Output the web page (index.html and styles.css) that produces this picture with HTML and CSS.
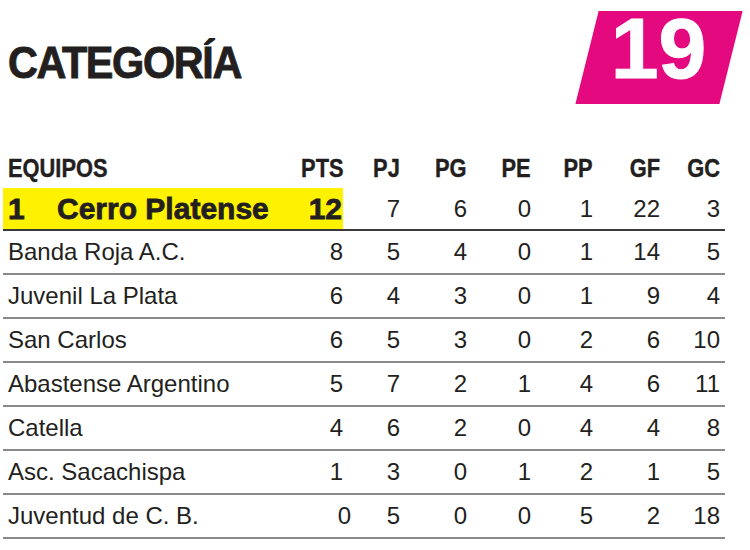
FILE: index.html
```html
<!DOCTYPE html>
<html lang="es">
<head>
<meta charset="utf-8">
<title>Categoría 19</title>
<link rel="stylesheet" href="styles.css">
</head>
<body>
<div class="page">
  <header class="top">
    <h1 class="title">CATEGORÍA</h1>
    <div class="badge"><span class="badge-num">19</span></div>
  </header>
  <div class="table">
    <div class="row head">
      <div class="c name"><span class="h">EQUIPOS</span></div>
      <div class="c"><span class="h">PTS</span></div>
      <div class="c"><span class="h">PJ</span></div>
      <div class="c"><span class="h">PG</span></div>
      <div class="c"><span class="h">PE</span></div>
      <div class="c"><span class="h">PP</span></div>
      <div class="c"><span class="h">GF</span></div>
      <div class="c"><span class="h">GC</span></div>
    </div>
    <div class="row leader">
      <div class="c name hl"><span class="rank">1</span>Cerro Platense</div>
      <div class="c pts hl">12</div>
      <div class="c">7</div>
      <div class="c">6</div>
      <div class="c">0</div>
      <div class="c">1</div>
      <div class="c">22</div>
      <div class="c">3</div>
    </div>
    <div class="row">
      <div class="c name">Banda Roja A.C.</div>
      <div class="c">8</div><div class="c">5</div><div class="c">4</div><div class="c">0</div><div class="c">1</div><div class="c">14</div><div class="c">5</div>
    </div>
    <div class="row">
      <div class="c name">Juvenil La Plata</div>
      <div class="c">6</div><div class="c">4</div><div class="c">3</div><div class="c">0</div><div class="c">1</div><div class="c">9</div><div class="c">4</div>
    </div>
    <div class="row">
      <div class="c name">San Carlos</div>
      <div class="c">6</div><div class="c">5</div><div class="c">3</div><div class="c">0</div><div class="c">2</div><div class="c">6</div><div class="c">10</div>
    </div>
    <div class="row">
      <div class="c name">Abastense Argentino</div>
      <div class="c">5</div><div class="c">7</div><div class="c">2</div><div class="c">1</div><div class="c">4</div><div class="c">6</div><div class="c">11</div>
    </div>
    <div class="row">
      <div class="c name">Catella</div>
      <div class="c">4</div><div class="c">6</div><div class="c">2</div><div class="c">0</div><div class="c">4</div><div class="c">4</div><div class="c">8</div>
    </div>
    <div class="row">
      <div class="c name">Asc. Sacachispa</div>
      <div class="c">1</div><div class="c">3</div><div class="c">0</div><div class="c">1</div><div class="c">2</div><div class="c">1</div><div class="c">5</div>
    </div>
    <div class="row">
      <div class="c name">Juventud de C. B.</div>
      <div class="c nudge">0</div><div class="c">5</div><div class="c">0</div><div class="c">0</div><div class="c">5</div><div class="c">2</div><div class="c">18</div>
    </div>
  </div>
</div>
</body>
</html>
```

FILE: styles.css
```css
html, body {
  margin: 0;
  padding: 0;
  background: #ffffff;
}

.page {
  width: 750px;
  height: 550px;
  overflow: hidden;
  color: #231f20;
  font-family: "Liberation Sans", Arial, sans-serif;
}

.top {
  display: flex;
  justify-content: space-between;
  align-items: flex-start;
  height: 148px;
}

.title {
  margin: 40px 0 0 8px;
  font-size: 45px;
  line-height: 45px;
  font-weight: 700;
  letter-spacing: -1.5px;
  -webkit-text-stroke: 0.9px currentColor;
  transform: scaleX(0.92);
  transform-origin: left center;
  white-space: nowrap;
}

.badge {
  position: relative;
  margin-right: 8px;
  width: 167px;
  height: 104px;
  display: flex;
  justify-content: center;
  align-items: flex-start;
}

.badge::before {
  content: "";
  position: absolute;
  left: 11.5px;
  right: 11.5px;
  top: 11px;
  height: 93px;
  background: #e4097f;
  transform: skewX(-14deg);
}

.badge-num {
  position: relative;
  color: #ffffff;
  font-size: 86px;
  line-height: 96px;
  font-weight: 700;
  -webkit-text-stroke: 1px #ffffff;
}

.table {
  margin-left: 3px;
  width: 722px;
}

.row {
  display: grid;
  grid-template-columns: 290px 50px 57px 67px 64px 62px 67px 60px;
  padding-right: 5px;
  height: 42px;
  align-items: center;
  font-size: 24px;
  border-bottom: 2px solid #8a8a8a;
}

.c {
  text-align: right;
  white-space: nowrap;
  line-height: 42px;
}

.c.name {
  text-align: left;
  padding-left: 5px;
}

.head {
  height: 40px;
  border-bottom: none;
  font-weight: 700;
  font-size: 26px;
}

.head .c {
  line-height: 40px;
}

.h {
  display: inline-block;
  transform: scaleX(0.84);
  transform-origin: right center;
  -webkit-text-stroke: 0.4px currentColor;
}

.head .name .h {
  transform-origin: left center;
}

.head .c:nth-child(2) {
  padding-right: 1px;
}

.leader {
  height: 41px;
  border-bottom: 2px solid #3a3a3a;
}

.leader .c {
  line-height: 41px;
}

.hl {
  background: #fff200;
  height: 41px;
}

.leader .name {
  font-weight: 700;
  font-size: 30px;
  padding-left: 5px;
  -webkit-text-stroke: 0.8px currentColor;
}

.rank {
  display: inline-block;
  width: 49px;
}

.leader .pts {
  font-weight: 700;
  font-size: 30px;
  padding-right: 1px;
  -webkit-text-stroke: 0.8px currentColor;
}

.nudge {
  margin-right: -8px;
}
```
